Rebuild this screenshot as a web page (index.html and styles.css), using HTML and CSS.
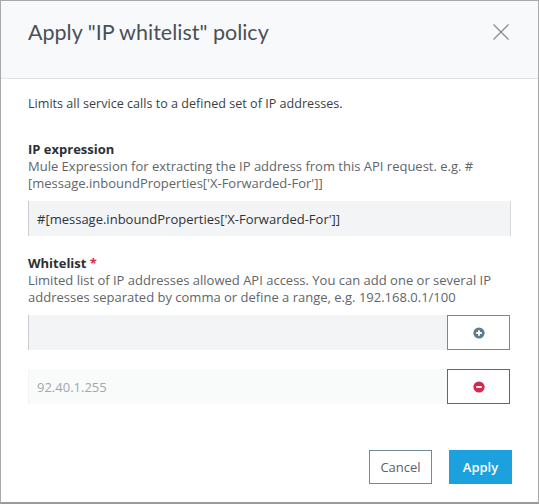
FILE: index.html
```html
<!DOCTYPE html>
<html>
<head>
<meta charset="utf-8">
<link rel="stylesheet" href="styles.css">
</head>
<body>
<div class="modal">
  <div class="header">
    <h1 class="title">Apply "IP whitelist" policy</h1>
    <svg class="close" width="16" height="16" viewBox="0 0 16 16"><path d="M0.5 0.5L15.5 15.5M15.5 0.5L0.5 15.5" stroke="#8a8a8a" stroke-width="1.2" fill="none"/></svg>
  </div>
  <div class="content">
    <p class="intro">Limits all service calls to a defined set of IP addresses.</p>
    <div class="field">
      <div class="label">IP expression</div>
      <div class="help">Mule Expression for extracting the IP address from this API request. e.g. #[message.inboundProperties['X-Forwarded-For']]</div>
      <div class="input">#[message.inboundProperties['X-Forwarded-For']]</div>
    </div>
    <div class="field field-2">
      <div class="label">Whitelist <span class="req">*</span></div>
      <div class="help">Limited list of IP addresses allowed API access. You can add one or several IP addresses separated by comma or define a range, e.g. 192.168.0.1/100</div>
      <div class="row">
        <div class="input grow"></div>
        <button class="btn-icon add"><svg width="12" height="12" viewBox="0 0 12 12"><circle cx="6" cy="6" r="5.6" fill="#5e7c8b"/><path d="M6 3.2V8.8M3.2 6H8.8" stroke="#fff" stroke-width="1.8"/></svg></button>
      </div>
      <div class="row row-2">
        <div class="input grow faded">92.40.1.255</div>
        <button class="btn-icon remove"><svg width="12" height="12" viewBox="0 0 12 12"><circle cx="6" cy="6" r="5.6" fill="#d2294c"/><path d="M3.2 6H8.8" stroke="#fff" stroke-width="1.8"/></svg></button>
      </div>
    </div>
  </div>
  <div class="footer">
    <button class="btn cancel">Cancel</button>
    <button class="btn apply">Apply</button>
  </div>
</div>
</body>
</html>
```
FILE: styles.css
```css
* { box-sizing: border-box; }
html, body { margin: 0; padding: 0; background: #fff; }
.modal {
  width: 539px;
  height: 504px;
  border: 1px solid #a9a9a9;
  border-bottom: 2px solid #9a9a9a;
  font-family: "Open Sans", sans-serif;
  color: #3b3f44;
  display: flex;
  flex-direction: column;
}
.header {
  height: 78px;
  background: #f8f9fb;
  border-bottom: 1px solid #e2e4e7;
  display: flex;
  align-items: center;
  justify-content: space-between;
  padding: 0 29px 16px 27px;
}
.title {
  margin: 0;
  font-family: "Lato", sans-serif;
  font-weight: 400;
  font-size: 21.5px;
  color: #4b5056;
}
.close { display: block; margin-top: 1px; }
.content { padding: 0 27px; }
.intro {
  margin: 16px 0 0;
  font-size: 12.6px;
  line-height: 17px;
}
.field { margin-top: 29px; }
.field-2 { margin-top: 19px; }
.label {
  font-weight: 700;
  font-size: 13px;
  line-height: 17px;
  color: #2c3034;
}
.req { color: #d2294c; }
.help {
  font-size: 13px;
  line-height: 17px;
  color: #61666b;
}
.input {
  margin-top: 9px;
  height: 35px;
  background: #f3f4f6;
  border-left: 1px solid #c9cdd1;
  border-right: 1px solid #d8dbde;
  padding: 0 8px;
  display: flex;
  align-items: center;
  font-size: 13px;
  color: #2f3337;
}
.row { display: flex; margin-top: 9px; }
.row .input { margin-top: 0; border-right: none; }
.row-2 { margin-top: 19px; }
.grow { flex: 1; }
.faded { background: #f9fafa; border-left-color: #f3f4f5; color: #a3a7ab; }
.btn-icon {
  width: 63px;
  height: 35px;
  background: #fff;
  padding: 0;
  display: flex;
  align-items: center;
  justify-content: center;
  margin-right: 1px;
}
.add { border: 1px solid #6c8d9b; }
.remove { border: 1px solid #d0334f; }
.footer {
  margin-top: auto;
  display: flex;
  justify-content: flex-end;
  gap: 17px;
  padding: 0 26px 18px 0;
}
.btn {
  height: 34px;
  width: 63px;
  font-family: "Open Sans", sans-serif;
  font-size: 13px;
  padding: 0;
}
.cancel { background: #fff; border: 1px solid #6c8a98; color: #5b6167; }
.apply { background: #1ba1de; border: 1px solid #1ba1de; color: #fff; font-weight: 600; }
```
